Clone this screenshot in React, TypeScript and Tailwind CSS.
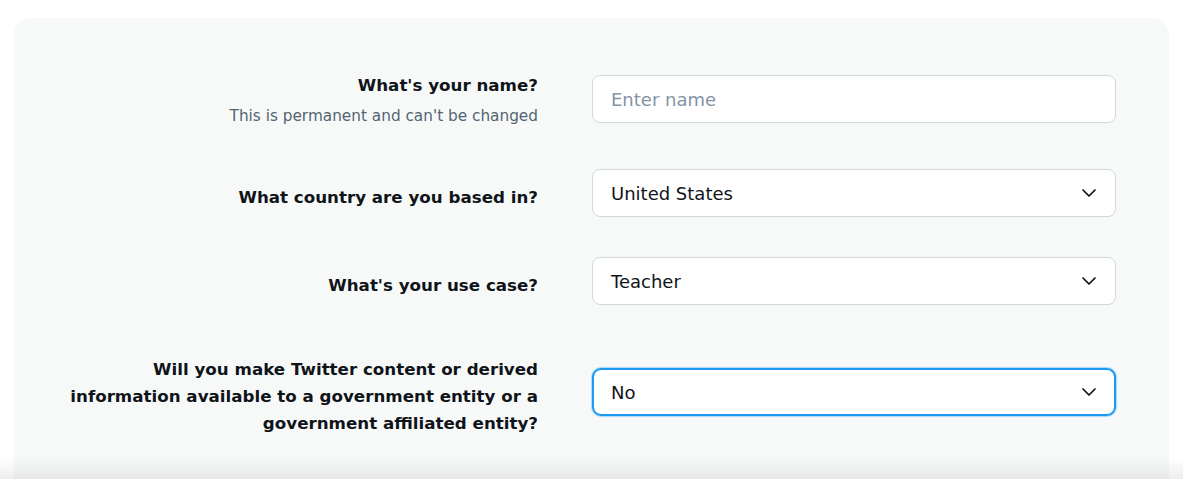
import React from 'react';

const font = { fontFamily: '"DejaVu Sans", "Liberation Sans", sans-serif' };

function Chevron() {
  return (
    <svg width="14" height="8" viewBox="0 0 14 8" className="shrink-0 text-[#0f1419]">
      <path d="M1 1l6 6 6-6" fill="none" stroke="currentColor" strokeWidth="1.7" strokeLinecap="round" strokeLinejoin="round" />
    </svg>
  );
}

type SelectBoxProps = {
  value: string;
  focused?: boolean;
};

function SelectBox({ value, focused }: SelectBoxProps) {
  return (
    <div
      className={
        focused
          ? 'flex h-[48px] w-[524px] shrink-0 items-center justify-between rounded-[9px] border-2 border-[#1d9bf0] bg-white pl-[17px] pr-[18px] shadow-[0_0_1px_1px_rgba(29,155,240,0.35)]'
          : 'flex h-[48px] w-[524px] shrink-0 items-center justify-between rounded-[8px] border border-[#cfd9de] bg-white pl-[18px] pr-[19px]'
      }
    >
      <span className="text-[18px] text-[#0f1419]">{value}</span>
      <Chevron />
    </div>
  );
}

export default function App() {
  return (
    <div className="relative h-[479px] overflow-hidden bg-white pt-[18px] pl-[14px]" style={font}>
      <div className="w-[1155px] rounded-t-[16px] bg-[#f7f9f9] pt-[55px] pb-16 pl-[44px]">
        <div className="flex flex-col">
          {/* name */}
          <div className="flex items-start gap-[54px]">
            <div className="w-[480px] text-right">
              <div className="text-[16.7px] font-bold leading-6 text-[#0f1419]">What's your name?</div>
              <div className="mt-[9px] text-[15.3px] leading-5 text-[#536471]">This is permanent and can't be changed</div>
            </div>
            <div className="mt-[2px] flex h-[48px] w-[524px] shrink-0 items-center rounded-[8px] border border-[#cfd9de] bg-white px-[18px]">
              <input
                placeholder="Enter name"
                className="w-full bg-transparent text-[18px] text-[#0f1419] outline-none placeholder:text-[#8294a5]"
                style={font}
              />
            </div>
          </div>

          {/* country */}
          <div className="mt-[43px] flex items-start gap-[54px]">
            <div className="mt-4 w-[480px] text-right text-[16.7px] font-bold leading-6 text-[#0f1419]">What country are you based in?</div>
            <SelectBox value="United States" />
          </div>

          {/* use case */}
          <div className="mt-10 flex items-start gap-[54px]">
            <div className="mt-4 w-[480px] text-right text-[16.7px] font-bold leading-6 text-[#0f1419]">What's your use case?</div>
            <SelectBox value="Teacher" />
          </div>

          {/* government */}
          <div className="mt-[51px] flex items-start gap-[54px]">
            <div className="w-[480px] text-right text-[16.7px] font-bold leading-[27px] text-[#0f1419]">
              Will you make Twitter content or derived information available to a government entity or a government affiliated entity?
            </div>
            <div className="mt-3">
              <SelectBox value="No" focused />
            </div>
          </div>
        </div>
      </div>
      <div className="pointer-events-none absolute inset-x-0 bottom-0 h-[22px] bg-gradient-to-b from-transparent to-black/[0.07]" />
    </div>
  );
}
